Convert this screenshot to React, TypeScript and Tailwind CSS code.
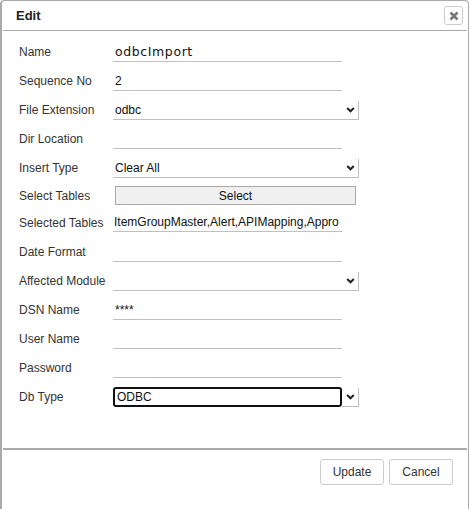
import React from "react";

const font = { fontFamily: '"Liberation Sans", Arial, sans-serif' };

function Chevron() {
  return (
    <svg width="9" height="6" viewBox="0 0 9 6">
      <path d="M1.2 1 L4.5 4.3 L7.8 1" stroke="#222" strokeWidth="2" fill="none" />
    </svg>
  );
}

function Row({ label, children, h = "h-[29px]" }: { label: string; children?: React.ReactNode; h?: string }) {
  return (
    <div className={"flex items-center " + h}>
      <div className="w-[94px] shrink-0 text-[12px] text-[#333]">{label}</div>
      {children}
    </div>
  );
}

function Input({ value, mono }: { value?: string; mono?: boolean }) {
  return (
    <div
      className={
        "mt-[2px] flex h-[19px] w-[229px] items-center border-b border-[#c0c0c0] pl-[2px] text-[#111] " +
        (mono ? "tracking-[0.6px]" : "text-[12px]")
      }
      style={mono ? { fontFamily: '"DejaVu Sans", Verdana, sans-serif', fontSize: 12.5 } : undefined}
    >
      {value}
    </div>
  );
}

function SelectBox({ value }: { value?: string }) {
  return (
    <div className="mt-[2px] flex items-end">
      <div className="flex h-[19px] w-[229px] items-center border-b border-[#c0c0c0] pl-[2px] text-[12px] text-[#111]">
        {value}
      </div>
      <div className="flex h-[19px] w-[17px] items-center justify-center border-r border-b border-[#c0c0c0]">
        <Chevron />
      </div>
    </div>
  );
}

export default function App() {
  return (
    <div className="h-[509px] w-[470px] overflow-hidden bg-white" style={font}>
      <div className="h-[520px] w-[469px] rounded-tl-[4px] rounded-tr-[4px] border-l-2 border-t border-r border-[#aaa]">
        <div className="mx-[1px] flex h-[30px] items-center justify-between border-b border-[#aaa] pl-[13px] pr-[4px]">
          <div className="text-[13px] font-semibold text-[#222]">Edit</div>
          <div className="flex h-[19px] w-[19px] items-center justify-center rounded-[3px] border border-[#ccc]">
            <svg width="10" height="10" viewBox="0 0 10 10">
              <path d="M1.5 1.5 L8.5 8.5 M8.5 1.5 L1.5 8.5" stroke="#777" strokeWidth="2.6" />
            </svg>
          </div>
        </div>
        <div className="pl-[17px] pt-[6px]">
          <Row label="Name">
            <Input value="odbcImport" mono />
          </Row>
          <Row label="Sequence No">
            <Input value="2" />
          </Row>
          <Row label="File Extension">
            <SelectBox value="odbc" />
          </Row>
          <Row label="Dir Location">
            <Input />
          </Row>
          <Row label="Insert Type">
            <SelectBox value="Clear All" />
          </Row>
          <Row label="Select Tables" h="h-[27px]">
            <div className="ml-[2px] flex h-[19px] w-[241px] items-center justify-center border border-[#aaa] bg-[#f0f0f0] text-[12px] text-[#111]">
              Select
            </div>
          </Row>
          <Row label="Selected Tables" h="h-[28px]">
            <div className="-mt-[2px] flex h-[19px] w-[229px] items-center overflow-hidden whitespace-nowrap border-b border-[#c0c0c0] pl-[1px] text-[12px] text-[#111]">
              ItemGroupMaster,Alert,APIMapping,Appro
            </div>
          </Row>
          <Row label="Date Format">
            <Input />
          </Row>
          <Row label="Affected Module">
            <SelectBox />
          </Row>
          <Row label="DSN Name">
            <Input value="****" />
          </Row>
          <Row label="User Name">
            <Input />
          </Row>
          <Row label="Password">
            <Input />
          </Row>
          <Row label="Db Type">
            <div className="flex items-end">
              <div className="flex h-[20px] w-[229px] items-center rounded-[3px] border-2 border-[#111] pl-[2px] text-[12px] text-[#111]">
                ODBC
              </div>
              <div className="flex h-[19px] w-[17px] items-center justify-center border-r border-b border-[#c0c0c0]">
                <Chevron />
              </div>
            </div>
          </Row>
        </div>
        <div className="mx-[1px] mt-[37px] border-b-2 border-[#aaa]" />
        <div className="flex justify-end gap-[5px] pr-[15px] pt-[9px]">
          <div className="flex h-[26px] w-[64px] items-center justify-center rounded-[3px] border border-[#ccc] text-[12px] text-[#333]">
            Update
          </div>
          <div className="flex h-[26px] w-[64px] items-center justify-center rounded-[3px] border border-[#ccc] text-[12px] text-[#333]">
            Cancel
          </div>
        </div>
      </div>
    </div>
  );
}
